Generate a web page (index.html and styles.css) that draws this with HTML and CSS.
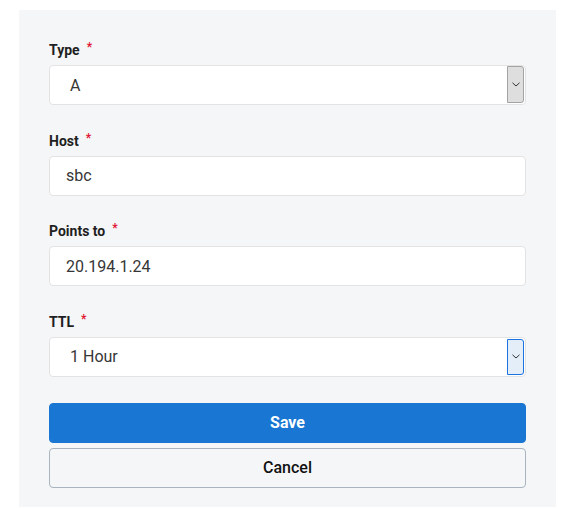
FILE: index.html
```html
<!DOCTYPE html>
<html lang="en">
<head>
<meta charset="utf-8">
<title>DNS record</title>
<link rel="stylesheet" href="styles.css">
</head>
<body>
<form class="panel">
  <div class="field">
    <label class="label">Type<span class="req">*</span></label>
    <div class="select">
      <span class="select-value">A</span>
      <span class="select-arrow">
        <svg width="8" height="5" viewBox="0 0 8 5"><path d="M0.5 0.8 L4 4 L7.5 0.8" fill="none" stroke="#333" stroke-width="1"/></svg>
      </span>
    </div>
  </div>
  <div class="field">
    <label class="label">Host<span class="req">*</span></label>
    <div class="input">sbc</div>
  </div>
  <div class="field">
    <label class="label">Points to<span class="req">*</span></label>
    <div class="input">20.194.1.24</div>
  </div>
  <div class="field">
    <label class="label">TTL<span class="req">*</span></label>
    <div class="select">
      <span class="select-value">1 Hour</span>
      <span class="select-arrow focus">
        <svg width="8" height="5" viewBox="0 0 8 5"><path d="M0.5 0.8 L4 4 L7.5 0.8" fill="none" stroke="#333" stroke-width="1"/></svg>
      </span>
    </div>
  </div>
  <div class="actions">
    <button type="button" class="btn btn-save">Save</button>
    <button type="button" class="btn btn-cancel">Cancel</button>
  </div>
</form>
</body>
</html>
```

FILE: styles.css
```css
html, body {
  margin: 0;
  padding: 0;
  background: #ffffff;
}

body {
  padding: 10px 0 0 19px;
  font-family: Roboto, "Liberation Sans", Arial, sans-serif;
}

.panel {
  box-sizing: border-box;
  width: 537px;
  height: 497px;
  background: #f5f6f8;
  padding: 30px 30px 20px 30px;
  display: flex;
  flex-direction: column;
  gap: 25.67px;
}

.field {
  display: flex;
  flex-direction: column;
  gap: 5px;
}

.label {
  font-size: 14px;
  font-weight: 700;
  line-height: 20px;
  color: #1f1f22;
  display: flex;
  align-items: flex-start;
}

.req {
  color: #e0132f;
  font-size: 12px;
  line-height: 14px;
  font-weight: 700;
  margin-left: 7px;
}

.input,
.select {
  box-sizing: border-box;
  height: 40px;
  background: #ffffff;
  border: 1px solid #e3e3e3;
  border-radius: 4px;
  font-size: 16px;
  color: #363636;
  display: flex;
  align-items: center;
}

.input {
  padding-left: 16px;
}

.select {
  padding-left: 20px;
  padding-right: 1px;
  align-items: stretch;
}

.select-value {
  flex: 1;
  display: flex;
  align-items: center;
}

.select-arrow {
  box-sizing: border-box;
  width: 17px;
  margin: 0 0 1px 0;
  background: #dedede;
  border: 1px solid #a3a3a3;
  border-radius: 0 3px 3px 0;
  display: flex;
  align-items: center;
  justify-content: center;
}

.select-arrow.focus {
  background: #e4eef9;
  border-color: #1a73e0;
  margin: 1px 0 1px 0;
}

.actions {
  display: flex;
  flex-direction: column;
  gap: 5px;
}

.btn {
  box-sizing: border-box;
  height: 40px;
  width: 100%;
  border-radius: 4px;
  font-family: Roboto, "Liberation Sans", Arial, sans-serif;
  font-size: 16px;
  cursor: pointer;
}

.btn-save {
  background: #1976d2;
  border: 1px solid #1976d2;
  color: #ffffff;
  font-weight: 700;
}

.btn-cancel {
  background: transparent;
  border: 1px solid #aab4bf;
  color: #111111;
  font-weight: 500;
}
```
